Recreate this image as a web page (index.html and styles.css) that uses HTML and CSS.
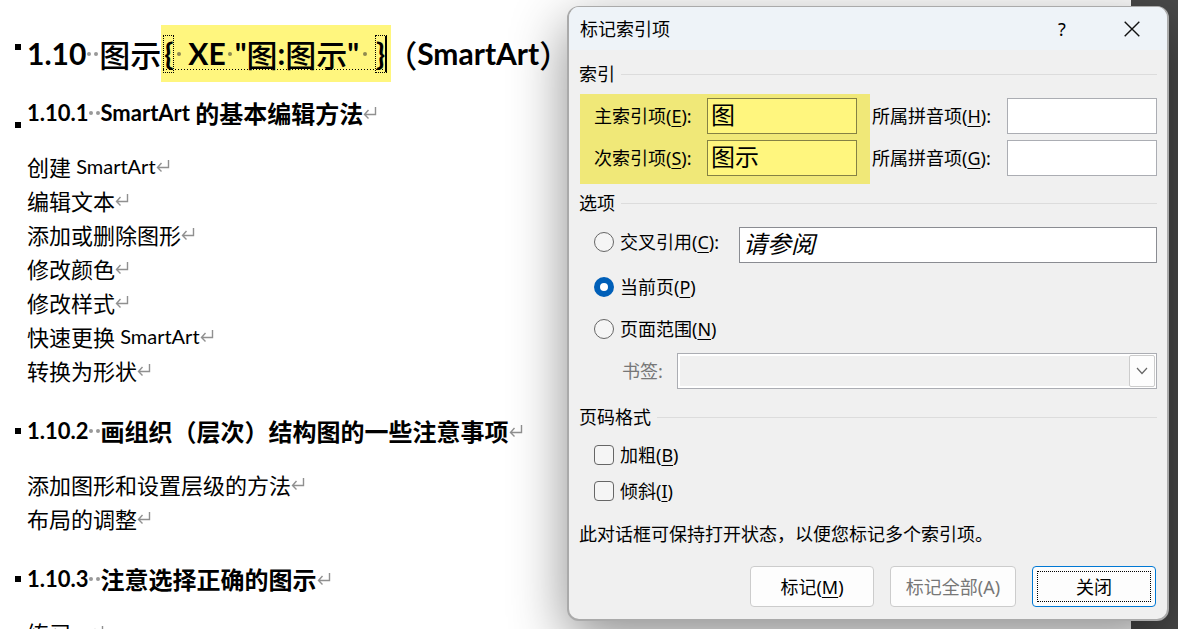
FILE: index.html
```
<!DOCTYPE html>
<html lang="zh-CN">
<head>
<meta charset="utf-8">
<title>标记索引项</title>
<link rel="stylesheet" href="styles.css">
</head>
<body>
<svg class="defs" width="0" height="0" aria-hidden="true">
  <symbol id="ret" viewBox="0 0 14 14"><path d="M12.500 1v7.500H1.500M5.500 4L1.500 8.500L5.500 12.500" fill="none" stroke="#909090" stroke-width="1.400"/></symbol>
</svg>
<main class="page">
  <h1 class="title"><span class="latin">1.10</span><span class="dots"><i></i><i></i></span>图示<span class="field"><span class="brace latin">{</span><span class="dots first"><i></i></span><span class="latin">XE</span><span class="dots one"><i></i></span><span class="latin">"</span>图<span class="latin">:</span>图示<span class="latin">"</span><span class="dots last"><i></i></span><span class="brace caret latin">}</span></span>（<span class="latin">SmartArt</span>）</h1>

  <h2 class="low"><span class="latin">1.10.1</span><span class="dots"><i></i><i></i></span><span class="latin">SmartArt </span>的基本编辑方法<svg class="ret"><use href="#ret"/></svg></h2>
  <p>创建<span class="latin"> SmartArt</span><svg class="ret"><use href="#ret"/></svg></p>
  <p>编辑文本<svg class="ret"><use href="#ret"/></svg></p>
  <p>添加或删除图形<svg class="ret"><use href="#ret"/></svg></p>
  <p>修改颜色<svg class="ret"><use href="#ret"/></svg></p>
  <p>修改样式<svg class="ret"><use href="#ret"/></svg></p>
  <p>快速更换<span class="latin"> SmartArt</span><svg class="ret"><use href="#ret"/></svg></p>
  <p>转换为形状<svg class="ret"><use href="#ret"/></svg></p>

  <h2><span class="latin">1.10.2</span><span class="dots"><i></i><i></i></span>画组织（层次）结构图的一些注意事项<svg class="ret"><use href="#ret"/></svg></h2>
  <p>添加图形和设置层级的方法<svg class="ret"><use href="#ret"/></svg></p>
  <p>布局的调整<svg class="ret"><use href="#ret"/></svg></p>

  <h2><span class="latin">1.10.3</span><span class="dots"><i></i><i></i></span>注意选择正确的图示<svg class="ret"><use href="#ret"/></svg></h2>
  <p>练习<span class="latin"> ...</span><svg class="ret"><use href="#ret"/></svg></p>
</main>

<form class="dialog" role="dialog" aria-labelledby="dlg-title">
  <header class="titlebar">
    <span id="dlg-title">标记索引项</span>
    <button type="button" class="winbtn" aria-label="帮助">?</button>
    <button type="button" class="winbtn" aria-label="关闭窗口"><svg width="16" height="16" viewBox="0 0 16 16"><path d="M.7.700L15.300 15.300M15.300.700L.7 15.300" stroke="#111" stroke-width="1.400"/></svg></button>
  </header>
  <div class="content">
    <div class="legend">索引</div>
    <div class="entries">
      <div class="pairs marked">
        <label for="main">主索引项(<u>E</u>):</label><input id="main" type="text" value="图">
        <label for="sub">次索引项(<u>S</u>):</label><input id="sub" type="text" value="图示">
      </div>
      <div class="pairs pinyin">
        <label for="py1">所属拼音项(<u>H</u>):</label><input id="py1" type="text">
        <label for="py2">所属拼音项(<u>G</u>):</label><input id="py2" type="text">
      </div>
    </div>

    <div class="legend options">选项</div>
    <div class="row cross">
      <label class="choice"><input type="radio" name="opt">交叉引用(<u>C</u>):</label>
      <input class="see" type="text" value="请参阅" aria-label="交叉引用文本">
    </div>
    <div class="row current"><label class="choice"><input type="radio" name="opt" checked>当前页(<u>P</u>)</label></div>
    <div class="row range"><label class="choice"><input type="radio" name="opt">页面范围(<u>N</u>)</label></div>
    <div class="row bookmark">
      <label for="bm">书签:</label>
      <span class="combo">
        <select id="bm" disabled></select>
        <span class="drop"><svg width="12" height="8" viewBox="0 0 12 8"><path d="M1 1l5 5.500L11 1" fill="none" stroke="#666" stroke-width="1.200"/></svg></span>
      </span>
    </div>

    <div class="legend format">页码格式</div>
    <div class="row bold"><label class="choice"><input type="checkbox">加粗(<u>B</u>)</label></div>
    <div class="row italic"><label class="choice"><input type="checkbox">倾斜(<u>I</u>)</label></div>
    <p class="note">此对话框可保持打开状态，以便您标记多个索引项。</p>
    <div class="actions">
      <button type="button">标记(<u>M</u>)</button>
      <button type="button" disabled>标记全部(A)</button>
      <button type="button" class="default"><span>关闭</span></button>
    </div>
  </div>
</form>
</body>
</html>
```
FILE: styles.css
```
* { box-sizing: border-box; }
html, body { height: 100%; }
body {
  margin: 0;
  position: relative;
  overflow: hidden;
  background: #4a4a4a;
  font-family: "Noto Sans", "Noto Sans CJK SC", sans-serif;
  color: #000;
}
.defs { position: absolute; }

.page {
  height: 100%;
  margin-right: 47px;
  padding: 25px 0 0 27px;
  overflow: hidden;
  background: #fff;
  font-family: "Noto Sans CJK SC", sans-serif;
  white-space: nowrap;
}
.latin { font-family: Lato, "Noto Sans CJK SC", sans-serif; white-space: pre; }
.page h1, .page h2, .page p { margin: 0; }
.page h1, .page h2 { position: relative; }
.page h1::before, .page h2::before {
  content: "";
  position: absolute;
  left: -12px;
  top: 14px;
  width: 6px;
  height: 6px;
  background: #000;
}
.title { display: flex; align-items: center; height: 57px; font-size: 31px; font-weight: 500; line-height: 55px; }
.title .latin { font-size: 30px; font-weight: 700; }
.page .title::before { top: 19px; }
.page h2 { display: flex; align-items: center; height: 34px; margin: 27px 0 19px; font-size: 24px; line-height: 34px; }
.page .low { margin: 14px 0 19px; }
.page .low::before { top: 26px; }
.page h2 .latin { font-size: 22px; }
.page p { display: flex; align-items: center; height: 34px; font-size: 22px; line-height: 34px; }
.page p .latin { font-size: 20px; }
.ret { width: 14px; height: 14px; flex: none; }

.dots { display: inline-flex; align-items: center; justify-content: center; gap: 3px; width: 12px; flex: none; }
.dots i { width: 4px; height: 4px; border-radius: 50%; background: #999; }
.title .dots { width: 13px; }
.field {
  display: flex;
  align-items: center;
  height: 57px;
  margin-right: -5px;
  padding: 0 4px 0 2px;
  background: linear-gradient(to right, #000 1px, transparent 1px) 0 44px / 3px 1px repeat-x content-box, #fff67e;
}
.field .dots i { background: #8f8a50; }
.field .brace { width: 11px; height: 38px; line-height: 34px; border: 1px dotted #000; display: flex; justify-content: center; }
.field .caret { border-right: 2px solid #000; width: 12px; }
.title .first { width: 14px; justify-content: flex-start; padding-left: 3px; }
.title .one { width: 9px; }
.title .last { width: 16px; justify-content: flex-start; padding-left: 4px; }

.dialog {
  position: absolute;
  top: 6px;
  right: 9px;
  width: 602px;
  max-width: 100%;
  overflow: hidden;
  border: 2px solid #aaa;
  border-top-width: 1px;
  border-radius: 12px;
  background: #f0f0f0;
  box-shadow: 0 18px 56px rgba(0, 0, 0, .45);
  font-size: 18px;
  line-height: 24px;
}
.titlebar { display: flex; align-items: center; height: 43px; padding: 0 11px; background: #eef3f8; }
#dlg-title { flex: 1; }
.winbtn { width: 70px; height: 42px; padding: 0; border: 0; background: none; font: inherit; display: flex; align-items: center; justify-content: center; }
.winbtn:last-child { margin-right: -11px; }
u { text-decoration-thickness: 1px; text-underline-offset: 3px; }

.content { padding: 12px 10px; }
.legend { display: flex; align-items: center; gap: 6px; }
.legend::after { content: ""; flex: 1; height: 1px; background: #dcdcdc; }
.entries { display: flex; margin: 8px 0 7px 1px; }
.pairs { display: grid; grid-template-columns: auto 150px; justify-content: space-between; align-content: start; align-items: center; gap: 6px 0; padding: 4px 0 8px; }
.marked { width: 290px; padding-left: 14px; padding-right: 13px; background: #f0e878; }
.pinyin { flex: 1; padding-left: 2px; }
input[type="text"] {
  min-width: 0;
  width: 100%;
  height: 36px;
  padding: 0 4px 6px 3px;
  border: 1px solid #abadb3;
  background: #fff;
  font-family: inherit;
  font-size: 24px;
  line-height: 28px;
  color: #000;
}
.marked input[type="text"] { border-color: #858144; background: #fff67e; }

.row { display: flex; margin-left: 15px; }
.choice { display: flex; align-items: center; white-space: pre; }
.choice input {
  appearance: none;
  width: 20px;
  height: 20px;
  margin: 0 6px 0 0;
  border: 1px solid #666;
  background: #f5f5f5;
}
.choice input[type="radio"] { border-radius: 50%; }
.choice input[type="checkbox"] { border-radius: 4px; }
.choice input[type="radio"]:checked { border: 6px solid #005fb8; background: #fff; }
.cross { margin-top: 12px; gap: 20px; }
.cross .choice { height: 30px; }
.cross .see { flex: 1; border-color: #8a8c92; font-style: italic; }
.current { margin-top: 12px; }
.range { margin-top: 18px; }
.bookmark { align-items: center; gap: 14px; margin: 12px 0 16px 43px; color: #777; }
.combo { position: relative; flex: 1; height: 36px; }
.combo select { appearance: none; width: 100%; height: 36px; border: 1px solid #abadb3; border-radius: 0; background: #f0f0f0; box-shadow: inset 0 0 0 2px #fff; opacity: 1; }
.drop { position: absolute; top: 2px; right: 2px; width: 26px; height: 32px; display: flex; align-items: center; justify-content: center; border: 1px solid #ccc; border-radius: 2px; background: #fdfdfd; pointer-events: none; }
.bold { margin-top: 14px; }
.italic { margin-top: 12px; }
.note { margin: 19px 0 20px; }
.actions { display: flex; justify-content: flex-end; gap: 16px; padding-right: 1px; }
.actions button { width: 124px; height: 41px; padding: 0; border: 1px solid #ccc; border-radius: 4px; background: #fdfdfd; font: inherit; color: #000; }
.actions button:disabled { width: 126px; color: #777; }
.actions .default { padding: 4px; border-color: #0078d4; }
.default span { display: flex; align-items: center; justify-content: center; height: 100%; border: 1px dotted #000; }
```
